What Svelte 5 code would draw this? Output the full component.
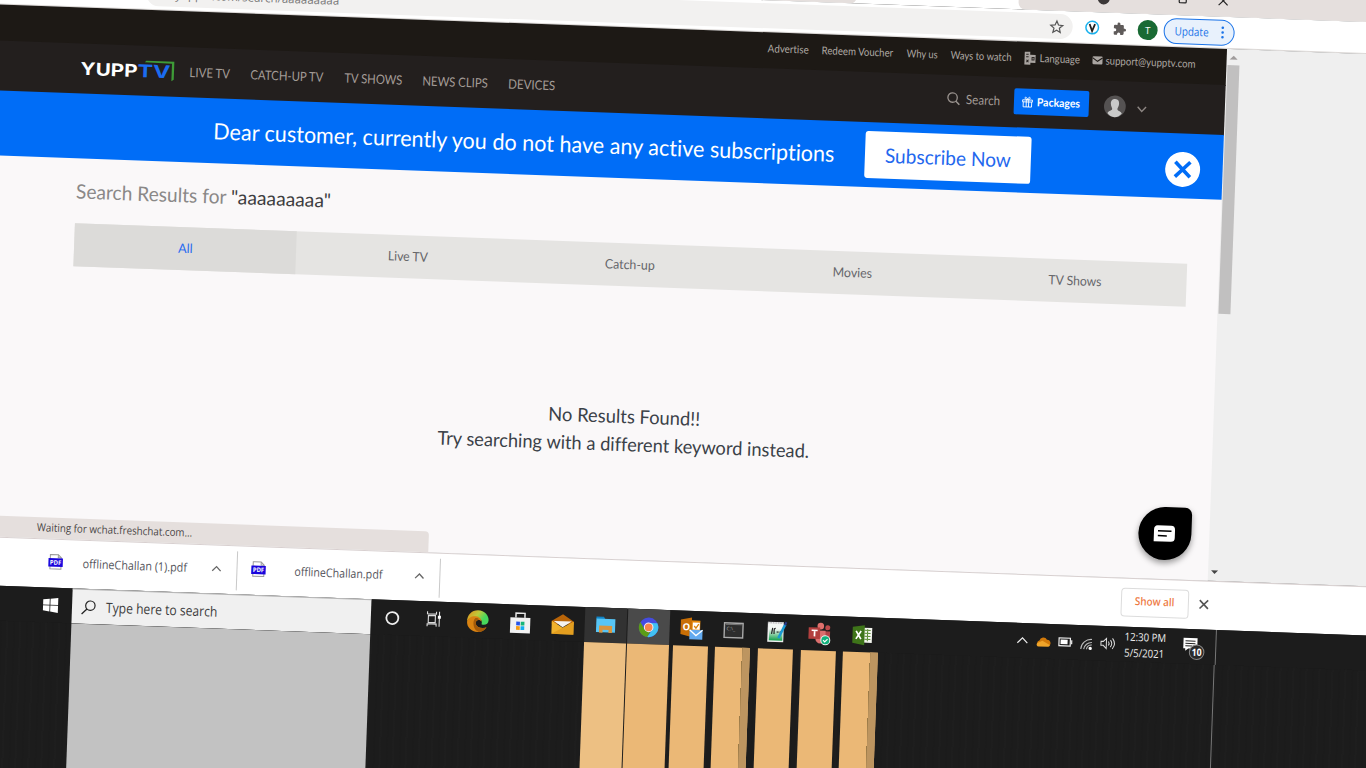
<script>
  const topLinks = [
    { t: 'Advertise', x: 769, w: 41 },
    { t: 'Redeem Voucher', x: 823, w: 71.5 },
    { t: 'Why us', x: 908, w: 31 },
    { t: 'Ways to watch', x: 952.2, w: 61 }
  ];
  const nav = [
    { t: 'LIVE TV', x: 192.3, w: 40.5 },
    { t: 'CATCH-UP TV', x: 253.2, w: 73 },
    { t: 'TV SHOWS', x: 346.6, w: 58 },
    { t: 'NEWS CLIPS', x: 425.4, w: 65.5 },
    { t: 'DEVICES', x: 511.4, w: 47 }
  ];
  const tabs = [
    { t: 'All', w: 14.5 },
    { t: 'Live TV', w: 40 },
    { t: 'Catch-up', w: 50 },
    { t: 'Movies', w: 39.5 },
    { t: 'TV Shows', w: 53 }
  ];
  const gaps = (list, start) =>
    list.map((n, i) => ({ ...n, gap: n.x - (i ? list[i - 1].x + list[i - 1].w : start) }));
  const topItems = gaps(topLinks, 0);
  const navItems = gaps(nav, 176.5);

  const columns = [
    { gap: 607.3, w: 42, c: '#edc083' },
    { gap: 1, w: 42, c: '#ebb876' },
    { gap: 3.5, w: 35, c: '#ebb876' },
    { gap: 7.6, w: 35, c: '#ebb876', shade: true },
    { gap: 7.6, w: 35, c: '#ebb876' },
    { gap: 7.7, w: 35, c: '#ebb876' },
    { gap: 7.7, w: 35, c: '#ebb876', shade: true }
  ];
</script>

{#snippet fit(t, w, size, h)}
  <svg class="fit" width={w} height={h} viewBox="0 0 {w} {h}">
    <text x="0" y={h / 2 + size * 0.36} font-size={size} textLength={w} lengthAdjust="spacingAndGlyphs">{t}</text>
  </svg>
{/snippet}

{#snippet pdf()}
  <svg class="pdf" width="16" height="16" viewBox="0 0 16 16">
    <path d="M2.5 .8h8l3 3v11.4h-11z" fill="#fff" stroke="#999" />
    <path d="M10.5 .8v3h3" fill="none" stroke="#999" />
    <rect x=".8" y="4.5" width="14.4" height="8.5" fill="#1a05dc" />
    <text x="2.3" y="11" font-size="6.4" font-weight="700" fill="#fff" textLength="11.4" lengthAdjust="spacingAndGlyphs">PDF</text>
  </svg>
{/snippet}

<div class="viewport">
  <div class="stage">
    <div class="tabstrip">
      <div class="strip-left"></div>
      <div class="strip-right">
        <svg class="win" width="200" height="32" viewBox="0 0 200 32">
          <circle cx="69" cy="18" r="6" fill="#3c3838" />
          <rect x="144.5" y="12" width="7" height="7.500" rx="1" fill="none" stroke="#222" stroke-width="1.2" />
          <path d="M184 11.500l9 9M193 11.500l-9 9" stroke="#222" stroke-width="1.2" />
        </svg>
      </div>
    </div>

    <div class="toolbar">
      <div class="address">
        <span class="url">{@render fit('yupptv.com/search/aaaaaaaaa', 164, 11.5, 20)}</span>
        <svg class="star" width="14" height="14" viewBox="0 0 14 14"><path d="M7 1.2l1.7 4 4.3.4-3.3 2.8 1 4.2L7 10.4l-3.700 2.200 1-4.200L1 5.600l4.300-.4z" fill="none" stroke="#555" stroke-width="1.2" /></svg>
      </div>
      <svg class="ext" width="15" height="17" viewBox="0 0 15 17"><circle cx="7.500" cy="8.500" r="6.300" fill="#fff" stroke="#1ab2ee" stroke-width="1.500" /><path d="M4.800 5l2.700 7 2.700-7" fill="none" stroke="#222" stroke-width="1.800" /></svg>
      <svg class="puzzle" width="14" height="14" viewBox="0 0 24 24"><path fill="#5f5b5a" d="M20.500 11H19V7a2 2 0 0 0-2-2h-4V3.500a2.500 2.500 0 0 0-5 0V5H4a2 2 0 0 0-2 2v3.800h1.500a2.700 2.700 0 0 1 0 5.400H2V20a2 2 0 0 0 2 2h3.800v-1.500a2.700 2.700 0 0 1 5.400 0V22H17a2 2 0 0 0 2-2v-4h1.500a2.500 2.500 0 0 0 0-5z" /></svg>
      <div class="profile">T</div>
      <div class="update">
        {@render fit('Update', 34, 11.5, 18)}
        <svg width="4" height="14" viewBox="0 0 4 14"><g fill="#1a73e8"><circle cx="2" cy="2" r="1.300" /><circle cx="2" cy="6.700" r="1.300" /><circle cx="2" cy="11.400" r="1.300" /></g></svg>
      </div>
    </div>

    <div class="window">
      <main class="page">
        <header class="top">
          {#each topItems as l}
            <a style="margin-left:{l.gap}px">{@render fit(l.t, l.w, 10.8, 16)}</a>
          {/each}
          <a class="lang">
            <svg width="11" height="13" viewBox="0 0 11 13"><path d="M0 0h5.500v3H11v8H6v2H0z" fill="#a9a4a0" /><path d="M1.500 2.500h2.500M1.500 5h2.500M2 8l2 2.500M4 8l-2 2.500M7.500 5.500h2v2.500h-2z" stroke="#2a2522" fill="none" /></svg>
            {@render fit('Language', 40.5, 10.8, 16)}
          </a>
          <a class="mail">
            <svg width="10" height="8" viewBox="0 0 10 8"><rect width="10" height="8" rx="1" fill="#aaa5a1" /><path d="M0 1.500l5 3.500 5-3.500" fill="none" stroke="#1d1915" /></svg>
            {@render fit('support@yupptv.com', 90, 10.8, 16)}
          </a>
        </header>

        <nav class="nav">
          <div class="logo">
            <svg width="94" height="22" viewBox="0 0 94 22" font-family="Inter, sans-serif" font-weight="700" font-size="17.500">
              <text x="0" y="17.500" fill="#fff" textLength="57" lengthAdjust="spacingAndGlyphs">YUPP</text>
              <text x="57" y="17.500" fill="#1b6cf0" textLength="33" lengthAdjust="spacingAndGlyphs">TV</text>
              <path d="M64 2.500l1.500-1.500H93.500V19l-2.300 1.500V3z" fill="#3e9b37" />
            </svg>
          </div>
          {#each navItems as n}
            <a style="margin-left:{n.gap}px">{@render fit(n.t, n.w, 12.900, 18)}</a>
          {/each}
          <div class="find">
            <svg width="13" height="13" viewBox="0 0 13 13"><circle cx="5.500" cy="5.500" r="4.700" fill="none" stroke="#9a938f" stroke-width="1.300" /><path d="M9 9l3.500 3.500" stroke="#9a938f" stroke-width="1.500" /></svg>
            {@render fit('Search', 34, 12.800, 18)}
          </div>
          <div class="packages">
            <svg width="11" height="11" viewBox="0 0 11 11"><path d="M.6 3.200h9.800v2H.6zM1.300 5.200v5h8.400v-5M4.300 3.200v7M6.700 3.200v7M5.500 3C2 2.800 2.500 0 4 .6 5 1 5.500 3 5.500 3S6 1 7 .6C8.500 0 9 2.800 5.500 3z" fill="none" stroke="#fff" stroke-width=".9" /></svg>
            {@render fit('Packages', 43, 11.200, 16)}
          </div>
          <svg class="avatar" width="22" height="23" viewBox="0 0 22 23"><circle cx="11" cy="11.500" r="10.900" fill="#555252" /><path d="M11 4c3.200 0 4.300 2.300 4.100 5-.2 2.500-1.300 3.700-1.500 5 0 2 3.400 2 4.600 4.300A10.500 10.500 0 0 1 11 22.400a10.500 10.500 0 0 1-7.200-4.100C5 16 8.400 16 8.400 14 8.200 12.700 7.100 11.500 6.900 9 6.700 6.300 7.800 4 11 4z" fill="#c9c9c9" /></svg>
          <svg class="caret" width="10" height="7" viewBox="0 0 10 7"><path d="M.8 1l4.200 4.500L9.200 1" fill="none" stroke="#8d8683" stroke-width="1.400" /></svg>
        </nav>

        <section class="banner">
          {@render fit('Dear customer, currently you do not have any active subscriptions', 621.500, 22.500, 40)}
          <div class="subscribe">{@render fit('Subscribe Now', 126, 20, 34)}</div>
          <svg class="dismiss" width="36" height="36" viewBox="0 0 36 36"><circle cx="18" cy="18" r="17.500" fill="#fff" /><path d="M10.500 10.500l15 15M25.500 10.500l-15 15" stroke="#006df7" stroke-width="3.600" /></svg>
        </section>

        <section class="results">
          <h1>
            {@render fit('Search Results for', 150.500, 20, 30)}
            <b>{@render fit('"aaaaaaaaa"', 100, 19.500, 30)}</b>
          </h1>
          <div class="tabs">
            {#each tabs as tab, i}
              <div class:active={i === 0}>{@render fit(tab.t, tab.w, 13, 18)}</div>
            {/each}
          </div>
          <div class="empty">
            {@render fit('No Results Found!!', 152, 19, 28)}
            {@render fit('Try searching with a different keyword instead.', 372, 19, 28)}
          </div>
        </section>

        <div class="status">{@render fit('Waiting for wchat.freshchat.com...', 155.500, 11, 16)}</div>
        <div class="chat">
          <svg width="22" height="17" viewBox="0 0 22 17"><path d="M4 .5h13.500a4 4 0 0 1 4 4v8a4 4 0 0 1-4 4H.5v-12a4 4 0 0 1 3.500-4z" fill="#fff" /><path d="M4.500 6h13.500M4.500 10.800h9" stroke="#000" stroke-width="1.500" /></svg>
        </div>
      </main>
      <aside class="scroll">
        <svg width="8" height="5" viewBox="0 0 8 5"><path d="M0 4.500L4 .5l4 4z" fill="#a09c9c" /></svg>
        <i></i>
        <svg class="down" width="7" height="5" viewBox="0 0 8 5"><path d="M0 .3h8L4 4.500z" fill="#444" /></svg>
      </aside>
    </div>

    <div class="shelf">
      <div class="file first">
        {@render pdf()}
        {@render fit('offlineChallan (1).pdf', 104.500, 12, 18)}
        <svg class="up" width="10" height="6" viewBox="0 0 10 6"><path d="M.8 5.300L5 1l4.200 4.300" fill="none" stroke="#666" stroke-width="1.300" /></svg>
      </div>
      <div class="file second">
        {@render pdf()}
        {@render fit('offlineChallan.pdf', 88, 12, 18)}
        <svg class="up" width="10" height="6" viewBox="0 0 10 6"><path d="M.8 5.300L5 1l4.200 4.300" fill="none" stroke="#666" stroke-width="1.300" /></svg>
      </div>
      <div class="show">{@render fit('Show all', 39.500, 11, 16)}</div>
      <svg class="close" width="10" height="10" viewBox="0 0 10 10"><path d="M.8.8l8.400 8.400M9.200.8L.8 9.200" stroke="#555" stroke-width="1.600" /></svg>
    </div>

    <footer class="taskbar">
      <svg class="start" width="15" height="15" viewBox="0 0 15 15"><path d="M0 2l6.500-.9v6H0zM7.300 1L15 0v7.100H7.300zM0 7.900h6.500v6L0 13zM7.300 7.900H15V15l-7.700-1z" fill="#fff" /></svg>
      <div class="search">
        <svg width="15" height="15" viewBox="0 0 15 15"><circle cx="9.300" cy="5.600" r="4.700" fill="none" stroke="#222" stroke-width="1.200" /><path d="M6 9L.8 14.200" stroke="#222" stroke-width="1.300" /></svg>
        {@render fit('Type here to search', 111.500, 14, 22)}
      </div>
      <div class="apps">
        <span><svg width="16" height="16" viewBox="0 0 16 16"><circle cx="7.500" cy="8" r="6" fill="none" stroke="#eee" stroke-width="1.800" /></svg></span>
        <span><svg width="16" height="15" viewBox="1 0 16 15"><path d="M1.500 0v2.500h9V0M1.500 15v-2.500h9V15M2.500 4h7v7h-7zM13.500 0v15" fill="none" stroke="#ddd" stroke-width="1.100" /><rect x="12" y="4" width="3" height="3" fill="#fff" /></svg></span>
        <span><svg width="22" height="22" viewBox="0 0 22 22">
          <defs><linearGradient id="edge" x1="0" y1="0" x2="1" y2=".5"><stop offset=".1" stop-color="#e0961c" /><stop offset=".5" stop-color="#bccb3c" /><stop offset=".85" stop-color="#47d85c" /></linearGradient></defs>
          <path d="M.3 12C0 5 5 .2 11 .2c6.500 0 10.800 4.800 10.800 9.500 0 4-3.800 5.600-7 4.300 1.200-3-.8-6-4-6.200C5 7.500 1 9 .3 12z" fill="url(#edge)" />
          <path d="M.3 12C1 8 5 5.800 9 6.200c3 .3 5.800 2.300 5.800 5.300-1.500-2.500-5.500-2-5.800 1-.3 3.500 4 6.500 10.800 4.500-2 3.300-5 4.800-8.800 4.800C5 21.800.3 17.500.3 12z" fill="#d98312" />
          <path d="M8.500 8c-3.500 3.500-1.500 13 4 13.700 3 0 6-2 7.600-5.200-5 2.500-11 .5-11-3.700 0-2 1.500-3.500 3.400-3.500C11.500 8 10 7.500 8.500 8z" fill="#a35a0a" />
        </svg></span>
        <span><svg width="21" height="22" viewBox="0 0 21 22"><path d="M6 6V1.500h9V6" fill="none" stroke="#e8e8e8" stroke-width="1.500" /><path d="M.5 6h20v15.500H.5z" fill="#f1f1f1" /><path d="M6.500 10h3.700v3.700H6.500z" fill="#2454e8" /><path d="M11 10h3.700v3.700H11z" fill="#18b578" /><path d="M6.500 14.500h3.700v3.700H6.500z" fill="#f59b10" /><path d="M11 14.500h3.700v3.700H11z" fill="#13aef0" /></svg></span>
        <span><svg width="22" height="20" viewBox="0 0 22 20"><path d="M0 7l11-7 11 7v3H0z" fill="#b86408" /><path d="M0 7l11 6.500L22 7v13H0z" fill="#f0b22d" /><path d="M0 20L22 7v13z" fill="#dc9418" opacity=".65" /><path d="M2 7h18l-9 6z" fill="#f4f2f0" /></svg></span>
        <span class="open"><svg width="20" height="17" viewBox="0 0 20 17"><path d="M.5 0h7.500l1.500 2.500h-9z" fill="#1085c8" /><path d="M.5 2h19V15.500H.5z" fill="#57c5f5" /><path d="M3.500 9h13v7h-3.500v-3H7v3H3.500z" fill="#d9953e" /></svg></span>
        <span class="current"><svg width="20" height="20" viewBox="0 0 20 20"><circle cx="10" cy="10" r="9.800" fill="#454ce0" /><path d="M1.500 5A9.800 9.800 0 0 0 9 19.800L13 12 6 12z" fill="#5b9c17" /><path d="M9 19.800A9.800 9.800 0 0 0 18.500 5.500H11l2.500 7z" fill="#41c1f2" /><circle cx="10" cy="10" r="4.800" fill="#eef" /><circle cx="10" cy="10" r="3.800" fill="#f8844c" /></svg></span>
        <span><svg width="23" height="23" viewBox="0 0 23 23"><path d="M10 3.500h10.500v11H10z" fill="#e8890b" /><path d="M13 5.500h7v7h-7z" fill="#fff" /><path d="M14.500 9l1.800 2L19 7" fill="none" stroke="#d9820b" stroke-width="1.300" /><path d="M1 3L12 .5V20L1 17.500z" fill="#c96f06" /><text x="3" y="13.500" font-size="9.500" font-weight="700" fill="#fff">O</text><path d="M10 13h13v9.500H10z" fill="#62aaf0" /><path d="M10 13l6.500 5.500L23 13" fill="none" stroke="#fff" stroke-width="1.300" /></svg></span>
        <span><svg width="20" height="16" viewBox="0 0 20 16"><rect x=".7" y=".7" width="18.600" height="14.600" fill="#2d2d2d" stroke="#a9a9a9" stroke-width="1.400" /><path d="M2 2h16" stroke="#777" /><text x="3" y="8" font-size="5" fill="#aaa">C:\_</text></svg></span>
        <span><svg width="20" height="22" viewBox="0 0 20 22"><defs><linearGradient id="pad" x2="0" y2="1"><stop offset=".3" stop-color="#f4f8f4" /><stop offset="1" stop-color="#13a04b" /></linearGradient></defs><path d="M1 1h16v20H1z" fill="#eee" /><path d="M2.500 3h13.500v16.500H2.500z" fill="url(#pad)" /><path d="M1 2h16" stroke="#aaa" stroke-dasharray="1.500 1" /><path d="M5 13l1-6M7.500 13V9q0-1.500 1.500-1.500M10 11h2M13 11h2" fill="none" stroke="#222" stroke-width="1.200" /><path d="M12 17l6.500-14" stroke="#1b9ad2" stroke-width="2.500" /><path d="M18 4l1.500-3" stroke="#263a8c" stroke-width="2" /></svg></span>
        <span><svg width="22" height="22" viewBox="0 0 22 22"><circle cx="12" cy="3.500" r="3.300" fill="#e0706c" /><circle cx="19" cy="5" r="2.500" fill="#bd4a4a" /><path d="M14 8.500h7.500v6a3.500 3.500 0 0 1-7 2z" fill="#b24347" /><path d="M7 8h10v8a5 5 0 0 1-10 0z" fill="#dc6f6e" /><path d="M0 5h11.500v11.500H0z" fill="#b3403f" /><path d="M3 8h6M6 8v6" stroke="#fff" stroke-width="1.700" /><circle cx="17" cy="17.500" r="4.500" fill="#10b17c" stroke="#e9f7f1" /><path d="M14.800 17.500l1.600 1.700 2.800-3" fill="none" stroke="#fff" stroke-width="1.200" /></svg></span>
        <span><svg width="20" height="20" viewBox="0 0 20 20"><path d="M10 2.500h9.500v15H10z" fill="#f4f6ef" /><path d="M12 5h6M12 8h6M12 11h6M12 14h6M15 4v12" stroke="#588b2f" /><path d="M0 2L12 0v20L0 18z" fill="#3e7419" /><path d="M3.500 6l5 8M8.500 6l-5 8" stroke="#fff" stroke-width="1.700" /></svg></span>
      </div>
      <div class="tray">
        <svg width="12" height="7" viewBox="0 0 12 7"><path d="M1 6l5-5 5 5" fill="none" stroke="#eee" stroke-width="1.200" /></svg>
        <svg width="14" height="10" viewBox="0 0 14 10"><path d="M3 4a4 4 0 0 1 7.500-1A3.400 3.400 0 0 1 13 9H2.500A2.600 2.600 0 0 1 3 4z" fill="#d37a0a" /><path d="M1 6.500l5-2.500 7.500 4a2 2 0 0 1-1.500 2H2.500A2 2 0 0 1 1 6.500z" fill="#f0a52a" /></svg>
        <svg width="14" height="9" viewBox="0 0 14 9"><path d="M.6.6h11.300v7.800H.6z" fill="none" stroke="#eee" stroke-width="1.200" /><path d="M2.200 2.200h7v4.600h-7z" fill="#fff" /><path d="M13.300 2.500v4" stroke="#eee" stroke-width="1.200" /></svg>
        <svg class="wifi" width="12" height="12" viewBox="0 0 12 12"><g fill="none" stroke="#bbb" stroke-width="1.100"><path d="M.6 11A10.400 10.400 0 0 1 11.500 1M3.500 11A8 8 0 0 1 11.500 4M6.300 11a5 5 0 0 1 5.200-4.500" /></g><circle cx="10" cy="10" r="1.700" fill="#fff" /></svg>
        <svg width="15" height="13" viewBox="0 0 15 13"><path d="M.6 4.500h2.300L6 1.500v10L2.900 8.500H.6z" fill="none" stroke="#ddd" /><path d="M8 4.500q1.500 2 0 4M10 3q2.800 3.500 0 7M12 1.200q4.200 5.300 0 10.600" fill="none" stroke="#ddd" /></svg>
      </div>
      <div class="clock">
        {@render fit('12:30 PM', 41.500, 11, 16)}
        {@render fit('5/5/2021', 40, 11, 16)}
      </div>
      <svg class="notice" width="26" height="24" viewBox="0 0 26 24"><path d="M1 1h14v10.500H6L3 14v-2.500H1z" fill="#fff" /><path d="M3 4h10M3 6.500h10M3 9h7" stroke="#222" /><circle cx="14.500" cy="15" r="7.300" fill="#2b2b2b" stroke="#888" /><text x="9.500" y="18.600" font-size="10" font-weight="700" fill="#fff" textLength="10" lengthAdjust="spacingAndGlyphs">10</text></svg>
      <div class="edge"></div>
    </footer>

    <div class="below">
      <div class="well"></div>
      <div class="columns">
        {#each columns as c}
          <div class:shade={c.shade} style="margin-left:{c.gap}px;width:{c.w}px;background-color:{c.c}"></div>
        {/each}
      </div>
      <div class="edge"></div>
    </div>
  </div>
</div>

<style>
  :global(body) { margin: 0; overflow: hidden; }
  .viewport { width: 1366px; height: 768px; overflow: hidden; background: #1c1c1c; font-family: 'Open Sans', sans-serif; font-variant-ligatures: none; }
  .stage { width: 1420px; display: flex; flex-direction: column; transform-origin: 0 0; transform: rotate(2.08deg) translate(-10px, -59.6px); }
  .stage svg { display: block; flex: none; overflow: visible; }
  .fit text { fill: currentColor; }

  .tabstrip { height: 32px; background: #fff; display: flex; justify-content: space-between; }
  .strip-left { width: 866px; background: #e5dfdd; border-radius: 0 0 6px 0; }
  .strip-right { width: 392px; background: #e5dfdd; border-radius: 0 0 0 7px; }
  .win { margin-left: 16px; }

  .toolbar { height: 32px; box-sizing: border-box; background: #fff; border-bottom: 1px solid #dcd8d6; display: flex; align-items: center; }
  .address { height: 25px; width: 927px; margin-left: 156px; border-radius: 12.500px; background: #f2f1f0; display: flex; align-items: center; justify-content: space-between; color: #777; }
  .url { margin-left: 29px; }
  .star { margin-right: 9px; }
  .ext { margin-left: 12px; }
  .puzzle { margin-left: 13px; }
  .profile { margin-left: 11px; width: 20px; height: 20px; border-radius: 50%; background: #196a34; color: #fff; font-size: 10px; line-height: 20px; text-align: center; }
  .update { margin-left: 6px; width: 71px; height: 26px; border: 1px solid #1a73e8; border-radius: 14px; background: #e8f1fc; color: #1a73e8; display: flex; align-items: center; justify-content: space-between; padding: 0 9px 0 10px; box-sizing: border-box; }

  .window { height: 532px; display: flex; background: #efefef; }
  .page { width: 1237.500px; height: 532px; background: #faf8f9; font-family: Lato, sans-serif; display: flex; flex-direction: column; position: relative; }
  .top { height: 37px; background: #1d1915; display: flex; align-items: center; padding-left: 10px; padding-bottom: 4.500px; box-sizing: border-box; color: #aea8a3; }
  .lang, .mail { display: flex; align-items: center; gap: 3.500px; margin-left: 13px; }
  .mail { gap: 3px; margin-left: 12.800px; }
  .nav { height: 51px; margin-top: -1px; padding-bottom: 1px; box-sizing: border-box; background: #231f1e; display: flex; align-items: center; color: #a39c97; }
  .logo { margin-left: 92.500px; }
  .find { display: flex; align-items: center; gap: 6px; margin: -3px 0 0 391.500px; }
  .packages { margin: -2px 0 0 14px; width: 75px; height: 26.500px; border-radius: 2px; background: #006df7; color: #fff; display: flex; align-items: center; justify-content: center; gap: 4px; font-weight: 700; }
  .avatar { margin-left: 15px; }
  .caret { margin: 4px 0 0 11px; }
  .banner { height: 65px; margin-top: -1px; box-sizing: border-box; background: #006df7; color: #fff; display: flex; align-items: center; padding-left: 227.600px; }
  .subscribe { margin-left: 31px; width: 166px; height: 47.500px; border-radius: 3px; background: #fff; color: #2367ee; display: flex; align-items: center; justify-content: center; }
  .dismiss { margin-left: 133.500px; margin-top: 6.500px; }
  .results { padding: 18px 0 0 92.700px; }
  h1 { margin: 0; height: 46.700px; display: flex; gap: 4.500px; color: #8a8888; font-weight: 400; }
  h1 b { color: #3d3d40; font-weight: 400; }
  .tabs { display: grid; grid-template-columns: repeat(5, 1fr); width: 1113.500px; height: 43.700px; background: #e5e4e2; color: #66666a; }
  .tabs div { display: flex; align-items: center; justify-content: center; padding-bottom: 1px; }
  .tabs .active { background: #dcdbd9; color: #2a6bf0; }
  .empty { width: 1113px; padding-top: 115.500px; display: flex; flex-direction: column; align-items: center; color: #3a4148; }
  .status { position: absolute; left: 0; bottom: 0; width: 457.500px; height: 21px; background: #e5dfdd; border-top-right-radius: 4px; color: #4a4646; font-family: 'Open Sans', sans-serif; display: flex; align-items: center; padding: 0 0 1px 66px; box-sizing: border-box; }
  .chat { position: absolute; left: 1166.500px; top: 459.500px; width: 53px; height: 53px; border-radius: 50% 7px 50% 50%; background: #000; box-shadow: 0 3px 6px rgba(0, 0, 0, 0.4); display: flex; align-items: center; justify-content: center; }
  .scroll { width: 14px; display: flex; flex-direction: column; align-items: center; }
  .scroll > svg { margin-top: 6px; }
  .scroll i { width: 12px; height: 249.500px; background: #c1c0c0; margin-top: 4.500px; }
  .scroll .down { margin-top: auto; margin-bottom: 6.500px; }

  .shelf { height: 49px; box-sizing: border-box; border-top: 1px solid #d8d0d0; background: #fff; display: flex; align-items: center; color: #55555c; }
  .file { display: flex; align-items: center; height: 39px; border-right: 1px solid #c9c9c9; box-sizing: border-box; padding-bottom: 1.500px; }
  .first { width: 268px; padding-left: 78px; }
  .second { width: 203px; padding-left: 13px; }
  .first .pdf { margin-right: 18.500px; margin-top: -2px; }
  .second .pdf { margin-right: 27.500px; margin-top: -2px; }
  .first .up { margin-left: 25px; }
  .second .up { margin-left: 32.500px; }
  .show { margin-left: 681px; margin-top: -1.500px; width: 67.500px; height: 29px; border: 1px solid #dcdcdc; border-radius: 4px; box-sizing: border-box; display: flex; align-items: center; justify-content: center; color: #ee7b45; font-weight: 600; padding-bottom: 2px; }
  .close { margin: -2px 0 0 10.500px; }

  .taskbar { height: 35px; background: #1c1c1c; display: flex; align-items: center; }
  .start { margin-left: 75px; }
  .search { margin-left: 14.200px; width: 299px; height: 35px; background: #f0f0f0; border-top: 1px solid #b5b5b5; box-sizing: border-box; display: flex; align-items: center; gap: 9.500px; padding: 0 0 0 9px; color: #3c3c3c; }
  .apps { display: flex; height: 35px; }
  .apps span { width: 42.700px; display: flex; align-items: center; justify-content: center; }
  .apps .open { background: #323232; width: 42px; margin-left: 0.500px; margin-right: 0.800px; }
  .apps .current { background: #4a4a4a; width: 42px; margin-right: 0.500px; }
  .tray { display: flex; align-items: center; gap: 7.900px; margin-left: 133.500px; color: #eee; }
  .wifi { margin-top: 2px; }
  .clock { margin-left: 9.500px; color: #eee; }
  .notice { margin-left: 15.800px; margin-top: 4.500px; }
  .taskbar .edge { width: 1px; height: 35px; background: #777; margin-left: 6.800px; }

  .below { height: 230px; display: flex; background: #1c1c1c repeating-linear-gradient(90deg, rgba(255, 255, 255, 0.008) 0 2px, transparent 2px 7px, rgba(0, 0, 0, 0.03) 7px 9px, transparent 9px 13px); }
  .well { width: 299px; height: 230px; background: #c2c2c2; margin-left: 104.200px; flex: none; }
  .columns { display: flex; height: 230px; margin-left: -393.200px; width: 1237px; flex: none; }
  .shade { background-image: linear-gradient(90deg, transparent 27px, #987845 27px, #bd9560 28px); }
  .below .edge { width: 1px; background: #777; }
</style>
